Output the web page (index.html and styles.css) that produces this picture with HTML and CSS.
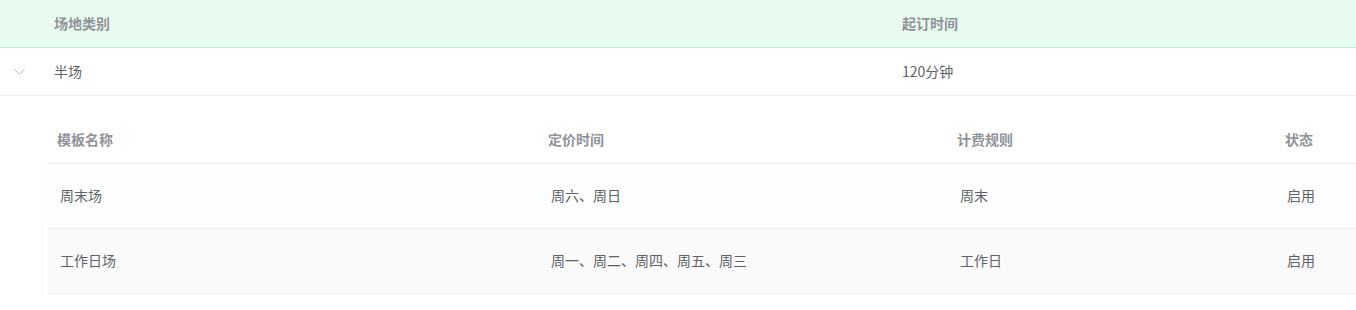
FILE: index.html
```html
<!DOCTYPE html>
<html lang="zh-CN">
<head>
    <meta charset="UTF-8">
    <meta name="viewport" content="width=device-width, initial-scale=1.0">
    <title>场地类别</title>
    <link rel="stylesheet" href="styles.css">
</head>
<body>
    <table class="grid">
        <colgroup>
            <col class="col-expand">
            <col class="col-type">
            <col>
        </colgroup>
        <thead>
            <tr>
                <th></th>
                <th>场地类别</th>
                <th>起订时间</th>
            </tr>
        </thead>
        <tbody>
            <tr class="parent-row">
                <td class="expand-cell">
                    <svg class="chevron" width="11" height="6" viewBox="0 0 11 6">
                        <path d="M0.5 0.5 L5.5 5.3 L10.5 0.5" fill="none" stroke="#b4b8bf" stroke-width="1"/>
                    </svg>
                </td>
                <td>半场</td>
                <td>120分钟</td>
            </tr>
            <tr class="detail-row">
                <td colspan="3">
                    <div class="detail">
                        <table class="sub-grid">
                            <colgroup>
                                <col class="col-name">
                                <col class="col-time">
                                <col class="col-rule">
                                <col>
                            </colgroup>
                            <thead>
                                <tr>
                                    <th>模板名称</th>
                                    <th>定价时间</th>
                                    <th>计费规则</th>
                                    <th class="state">状态</th>
                                </tr>
                            </thead>
                            <tbody>
                                <tr>
                                    <td>周末场</td>
                                    <td>周六、周日</td>
                                    <td>周末</td>
                                    <td class="state">启用</td>
                                </tr>
                                <tr class="striped">
                                    <td>工作日场</td>
                                    <td>周一、周二、周四、周五、周三</td>
                                    <td>工作日</td>
                                    <td class="state">启用</td>
                                </tr>
                            </tbody>
                        </table>
                    </div>
                </td>
            </tr>
        </tbody>
    </table>
</body>
</html>
```

FILE: styles.css
```css
body {
    margin: 0;
    font-family: "Noto Sans CJK SC", "Liberation Sans", sans-serif;
    font-size: 14px;
    color: #606266;
    background: #fff;
}
table {
    border-collapse: collapse;
    table-layout: fixed;
    width: 100%;
}
th, td {
    text-align: left;
    padding: 0 10px;
    line-height: 23px;
}
th {
    font-weight: bold;
    color: #909399;
}

/* outer table */
.col-expand {
    width: 44px;
}
.col-type {
    width: 848px;
}
.grid > thead th {
    height: 46px;
    padding-bottom: 1px;
    background: #e9faf0;
    border-bottom: 1px solid #c3e8d2;
}
.parent-row td {
    height: 46px;
    padding-bottom: 1px;
    border-bottom: 1px solid #ebeef5;
}
.expand-cell {
    padding: 0 0 0 14px;
}
.chevron {
    display: block;
    margin-top: 2px;
}
.detail-row > td {
    padding: 0;
}
.detail {
    padding: 20px 0 16px 47px;
}

/* nested table */
.col-name {
    width: 491px;
}
.col-time {
    width: 409px;
}
.col-rule {
    width: 328px;
}
.sub-grid th {
    height: 47px;
    border-bottom: 1px solid #ebeef5;
}
.sub-grid td {
    height: 62px;
    padding-left: 13px;
    padding-bottom: 2px;
    background: #fcfefd;
    border-bottom: 1px solid #ebeef5;
}
.sub-grid tr.striped td {
    background: #fafafa;
}
.sub-grid .state {
    padding-left: 10px;
}
.sub-grid td.state {
    padding-left: 12px;
}
```
